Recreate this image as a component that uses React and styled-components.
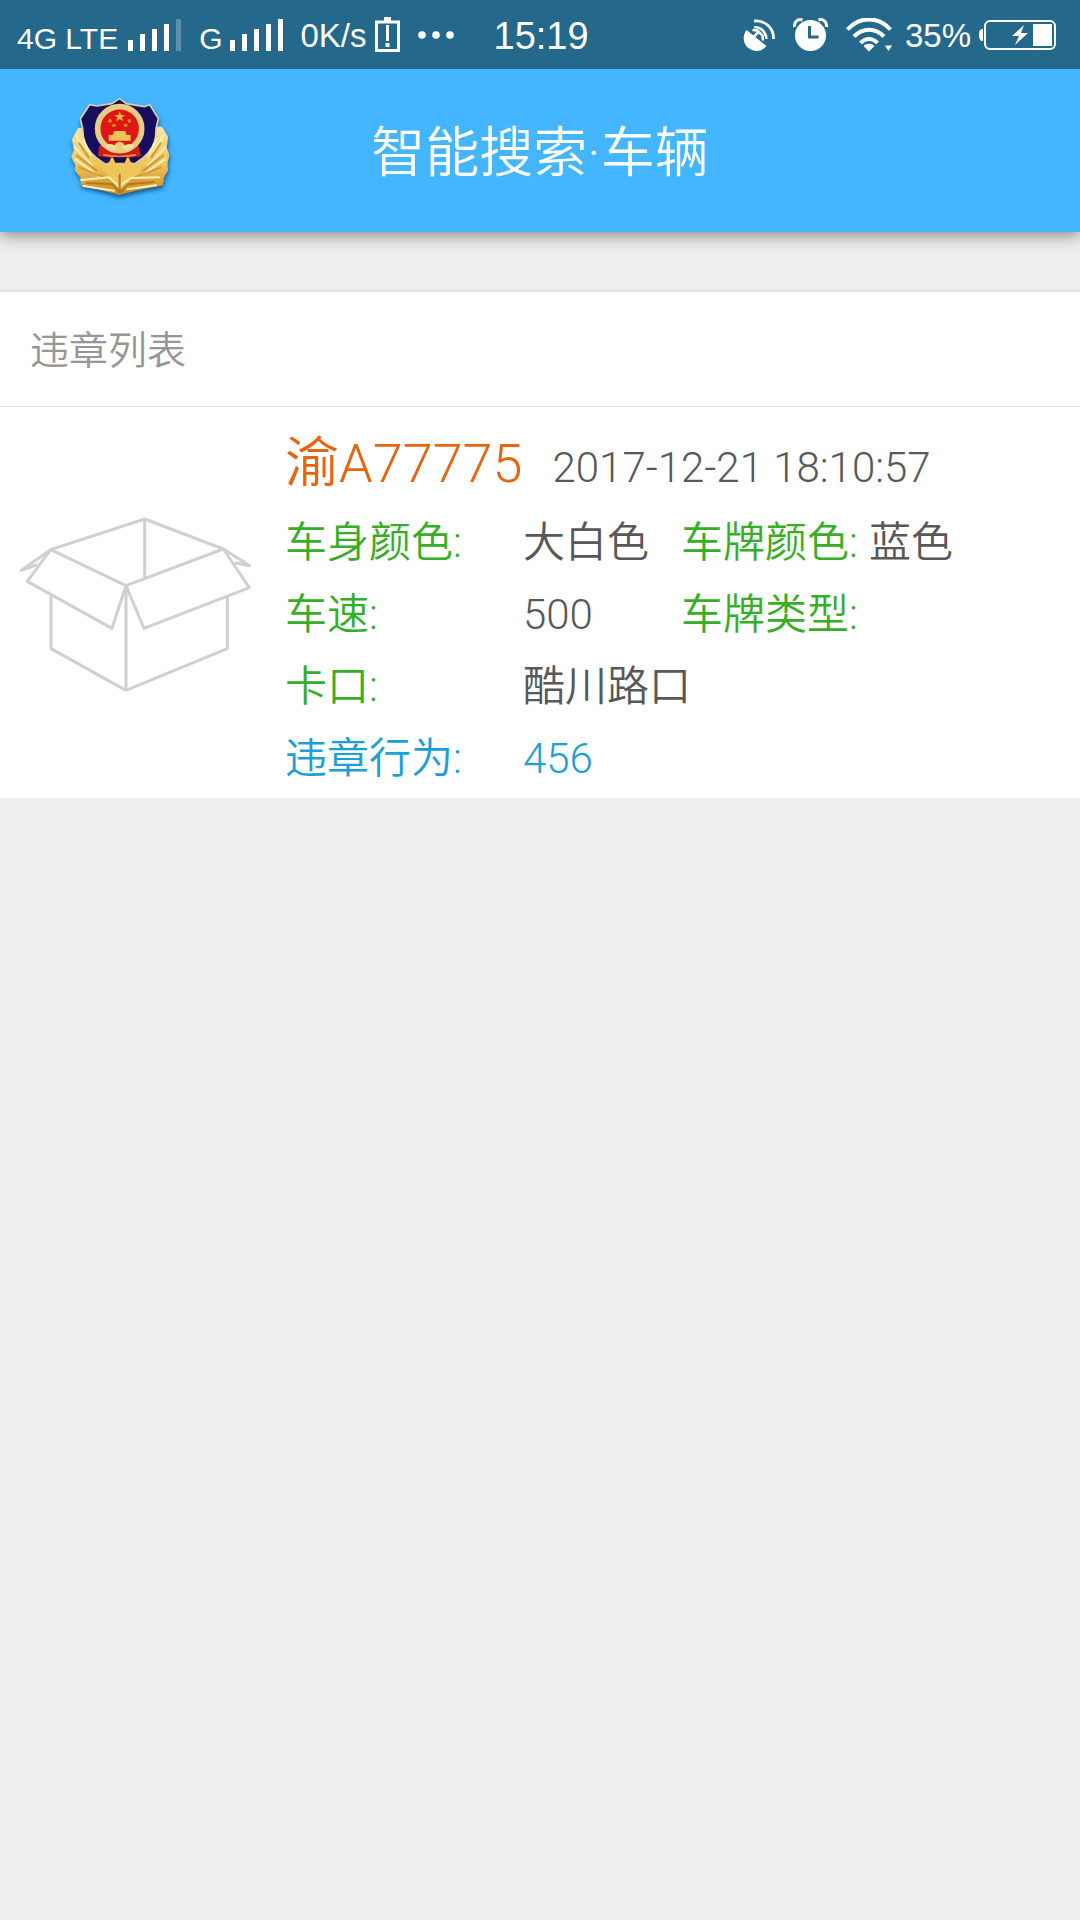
import React from "react";
import styled, { createGlobalStyle } from "styled-components";

const GlobalStyle = createGlobalStyle`
  * { box-sizing: border-box; }
  body {
    margin: 0;
    background: #eeeeee;
    color: #585858;
    font-family: Roboto, "Noto Sans CJK SC", sans-serif;
    font-weight: 350;
  }
  h1, h2, p, dl, dt, dd { margin: 0; font-weight: inherit; }
  svg { display: block; flex: none; }
`;

const StatusBar = styled.div`
  position: relative;
  z-index: 1;
  display: flex;
  align-items: center;
  justify-content: space-between;
  height: 69px;
  padding: 0 24px 0 17px;
  background: #24688c;
  color: #ffffff;
  font-family: "Liberation Sans", Arial, sans-serif;
  font-weight: 400;
`;

const StatusGroup = styled.div`
  display: flex;
  align-items: center;
  gap: ${(p) => p.$gap}px;
`;

const StatusText = styled.span`
  font-size: ${(p) => p.$size}px;
  line-height: 40px;
  padding-top: ${(p) => (p.$low ? 8 : 2)}px;
`;

const Clock = styled.time`
  padding: 2px 0 0 22px;
  font-size: 38px;
  line-height: 40px;
`;

const Header = styled.header`
  position: relative;
  display: grid;
  grid-template-columns: 1fr auto 1fr;
  align-items: center;
  height: 163px;
  padding: 0 70px 10px;
  background: #43b6ff;
  box-shadow: 0 2px 16px rgba(0, 0, 0, 0.5);
`;

const Title = styled.h1`
  padding-top: 16px;
  color: #ffffff;
  font-size: 54px;
  line-height: 72px;
`;

const Panel = styled.section`
  margin-top: 58px;
  border-top: 2px solid #e6e6e6;
  background: #ffffff;
`;

const PanelTitle = styled.h2`
  padding: 30px 30px 26px;
  border-bottom: 1px solid #e4e4e4;
  color: #969696;
  font-size: 39px;
  line-height: 58px;
`;

const Record = styled.article`
  display: flex;
  align-items: center;
  gap: 34px;
  padding: 18px 20px 3px;
`;

const Picture = styled.div`
  padding-bottom: 10px;
`;

const Details = styled.div`
  flex: 1;
`;

const RecordHead = styled.div`
  display: flex;
  align-items: baseline;
  gap: 30px;
  padding-bottom: 4px;
`;

const Plate = styled.p`
  color: #e8650f;
  font-size: 54px;
  line-height: 78px;
`;

const Moment = styled.time`
  font-size: 42px;
`;

const Fields = styled.dl`
  display: grid;
  grid-template-columns: 238px 1fr;
`;

const Field = styled.div`
  display: grid;
  grid-template-columns: subgrid;
  grid-column: 1 / -1;
  color: ${(p) => (p.$accent ? "#1c9fd8" : "inherit")};
  font-size: 42px;
  line-height: 72px;
`;

const Label = styled.dt`
  color: ${(p) => (p.$accent ? "#1c9fd8" : "#38ae28")};
  white-space: nowrap;
`;

const Split = styled.div`
  display: grid;
  grid-template-columns: 158px 188px 1fr;
`;

const Value = styled.dd`
  white-space: nowrap;
`;

function Signal({ dim }) {
  return (
    <svg width="53" height="34" viewBox="0 0 53 34" fill="#fff" aria-hidden="true">
      <rect x="0" y="22" width="5" height="11" />
      <rect x="12" y="16" width="5" height="17" />
      <rect x="24" y="11" width="5" height="22" />
      <rect x="36" y="6" width="5" height="27" />
      <rect x="48" y="1" width="5" height="32" opacity={dim ? 0.25 : 1} />
    </svg>
  );
}

function SimAlert() {
  return (
    <svg width="25" height="36" viewBox="0 0 25 36" fill="none" aria-hidden="true">
      <path d="M1.500 5h22v28.500h-22z" stroke="#fff" strokeWidth="3" />
      <path d="M9 0h7v4h-7z" fill="#fff" />
      <path d="M11 8h3v16h-3zM10.500 26h4v4h-4z" fill="#fff" />
    </svg>
  );
}

function More() {
  return (
    <svg width="36" height="8" viewBox="0 0 36 8" fill="#fff" aria-hidden="true">
      <circle cx="4" cy="4" r="3.8" />
      <circle cx="18" cy="4" r="3.8" />
      <circle cx="32" cy="4" r="3.8" />
    </svg>
  );
}

function Satellite() {
  return (
    <svg width="32" height="32" viewBox="0 0 32 32" fill="none" aria-hidden="true">
      <path d="M3.500 11C-1 17 0 25 6 29.500c6 4 13 3 17.500-2.500z" fill="#fff" />
      <path d="M11 17.500l5-5" stroke="#fff" strokeWidth="2.500" />
      <path d="M9.500 11l5 .5 5 5 .5 5" stroke="#fff" strokeWidth="2.500" />
      <path d="M11 8c7 0 12 5 12.500 12" stroke="#fff" strokeWidth="2.500" />
      <path d="M11 2c11-1 20 7 19.500 18" stroke="#fff" strokeWidth="2.800" />
    </svg>
  );
}

function Alarm() {
  return (
    <svg width="35" height="34" viewBox="0 0 35 34" fill="none" aria-hidden="true">
      <circle cx="17.500" cy="17.500" r="15.500" fill="#fff" />
      <path d="M1.500 9C1 3.500 5 0.500 9.500 2M33.500 9C34 3.500 30 0.500 25.500 2" stroke="#fff" strokeWidth="3" />
      <path d="M16.500 8v11h9" stroke="#24688c" strokeWidth="3" />
    </svg>
  );
}

function Wifi() {
  return (
    <svg width="47" height="34" viewBox="0 0 47 34" fill="none" aria-hidden="true">
      <path d="M1.500 11.500C14-2 32-2 44.500 11.500" stroke="#fff" strokeWidth="4" />
      <path d="M8 18.500c9-9 21-9 30 0" stroke="#fff" strokeWidth="4" />
      <path d="M14.500 25c5-5.500 12-5.500 17 0" stroke="#fff" strokeWidth="4" />
      <path d="M17.500 28c3-3 8-3 11 0L23 33.500z" fill="#fff" />
      <path d="M39 27.500h7l-3.500 5.500z" fill="#fff" />
    </svg>
  );
}

function Battery() {
  return (
    <svg width="77" height="32" viewBox="0 0 77 32" fill="none" aria-hidden="true">
      <path d="M4 10C1 10 0 12 0 16s1 6 4 6z" fill="#fff" />
      <rect x="6" y="2" width="70" height="28" rx="5" stroke="#fff" strokeWidth="2" />
      <path d="M45 6L33 17h7l-4 9 13-12h-7z" fill="#fff" />
      <rect x="54" y="5" width="19" height="22" fill="#fff" />
    </svg>
  );
}

function Emblem() {
  return (
    <svg width="100" height="102" viewBox="60 45 300 306" overflow="visible" role="img" aria-label="警徽">
      <defs>
        <linearGradient id="gold" x1="0" y1="0" x2="0" y2="1">
          <stop offset="0" stopColor="#f7e3a4" />
          <stop offset="0.550" stopColor="#efc65c" />
          <stop offset="1" stopColor="#c8891c" />
        </linearGradient>
        <filter id="shade" x="-20%" y="-20%" width="140%" height="150%">
          <feDropShadow dx="2" dy="9" stdDeviation="7" floodColor="#063a66" floodOpacity="0.75" />
        </filter>
      </defs>
      <g filter="url(#shade)">
        <path d="M84 144L66 178l6 32-8 20 12 26-2 14 18 24 1 22 60 14 55 14 56-14 74-14 4-24 12-22-2-20 6-24-8-22 4-34-18-30z" fill="url(#gold)" />
        <path d="M209 56l20 15 54 9 16-6 26 42-7 30c2 58-28 92-109 128-81-36-110-70-111-128l-7-30 28-42 22 4 44-7z" fill="#16105c" stroke="#d8cfae" strokeWidth="5" />
      </g>
      <path d="M150 258l28-12 8-20 10 22h28l10-22 8 20 28 8 4 18-65 58z" fill="#efc65c" />
      <path d="M148 196l-4 32 40 6 25-10 26 10 38-6-8-32z" fill="#cf1a18" />
      <circle cx="209" cy="146" r="66" fill="#dd1714" stroke="#e9cb84" strokeWidth="17" />
      <path d="M209 94l4 11h12l-9 7 3 12-10-7-10 7 3-12-9-7h12z" fill="#f8b53a" />
      <path d="M178 116l8 4-4 9-8-4zM240 116l-8 4 4 9 8-4zM187 132h10v8h-10zM222 132h10v8h-10z" fill="#f08c28" />
      <path d="M192 153h34l4 12h12v17h-66v-17h12z" fill="#f3c256" />
      <circle cx="209" cy="201" r="16" fill="#efcb72" />
      <path d="M165 195q22-8 38 8-20 16-38-8zM253 195q-22-8-38 8 20 16 38-8z" fill="#f3dd9d" />
      <path d="M160 224c28 6 70 6 98 0" stroke="#e88428" strokeWidth="6" fill="none" />
      <g fill="none" strokeWidth="6" strokeLinecap="round">
        <path d="M78 166l30 50M74 202l52 54M76 238l72 50M98 178l24 48M340 166l-30 50M346 202l-52 54M344 238l-72 50M320 178l-24 48" stroke="#fff0b8" />
        <path d="M88 190l28 42M80 226l60 46M88 262l94 38M332 190l-28 42M340 226l-60 46M332 262l-94 38" stroke="#d39a38" />
        <path d="M94 300l82-8 30 26 38-24 84-2M100 318l92 14M318 316l-86 12" stroke="#fff0b8" />
        <path d="M110 309l76 3 24 26 24-25 76-7M209 284v48" stroke="#b9791a" />
      </g>
    </svg>
  );
}

function EmptyBox() {
  return (
    <svg width="231" height="176" viewBox="60 80 693 528" fill="none" stroke="#d0d0d0" strokeWidth="9" strokeLinejoin="round" role="img" aria-label="暂无图片">
      <path d="M152 178L434 86l236 90-292 110z" />
      <path d="M434 86v176" />
      <path d="M152 178L82 273l254 141 42-128 54 128 316-122-78-116" />
      <path d="M152 178L64 240l48-17M670 176l79 50-44-9" />
      <path d="M153 318v157l225 125 304-125V318M378 286v314" />
    </svg>
  );
}

export default function App() {
  return (
    <>
      <GlobalStyle />
      <StatusBar>
        <StatusGroup $gap={18}>
          <StatusGroup $gap={10}>
            <StatusText $size={30} $low>4G LTE</StatusText>
            <Signal dim />
          </StatusGroup>
          <StatusGroup $gap={7}>
            <StatusText $size={30} $low>G</StatusText>
            <Signal />
          </StatusGroup>
          <StatusGroup $gap={8}>
            <StatusText $size={33}>0K/s</StatusText>
            <SimAlert />
          </StatusGroup>
          <More />
          <Clock>15:19</Clock>
        </StatusGroup>
        <StatusGroup $gap={18}>
          <Satellite />
          <Alarm />
          <StatusGroup $gap={12}>
            <Wifi />
            <StatusGroup $gap={8}>
              <StatusText $size={33}>35%</StatusText>
              <Battery />
            </StatusGroup>
          </StatusGroup>
        </StatusGroup>
      </StatusBar>
      <Header>
        <Emblem />
        <Title>智能搜索·车辆</Title>
      </Header>
      <main>
        <Panel>
          <PanelTitle>违章列表</PanelTitle>
          <Record>
            <Picture>
              <EmptyBox />
            </Picture>
            <Details>
              <RecordHead>
                <Plate>渝A77775</Plate>
                <Moment dateTime="2017-12-21T18:10:57">2017-12-21 18:10:57</Moment>
              </RecordHead>
              <Fields>
                <Field>
                  <Label>车身颜色:</Label>
                  <Split as="dd">
                    <span>大白色</span>
                    <Label as="span">车牌颜色:</Label>
                    <span>蓝色</span>
                  </Split>
                </Field>
                <Field>
                  <Label>车速:</Label>
                  <Split as="dd">
                    <span>500</span>
                    <Label as="span">车牌类型:</Label>
                  </Split>
                </Field>
                <Field>
                  <Label>卡口:</Label>
                  <Value>酷川路口</Value>
                </Field>
                <Field $accent>
                  <Label $accent>违章行为:</Label>
                  <Value>456</Value>
                </Field>
              </Fields>
            </Details>
          </Record>
        </Panel>
      </main>
    </>
  );
}
